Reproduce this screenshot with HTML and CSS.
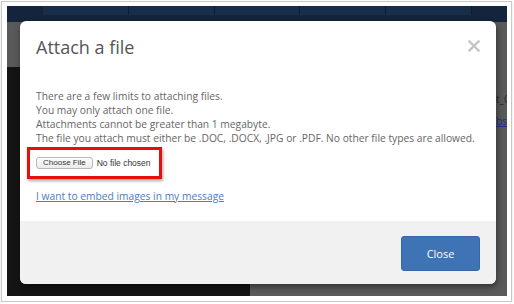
FILE: index.html
```html
<!DOCTYPE html>
<html>
<head>
<meta charset="utf-8">
<link rel="stylesheet" href="styles.css">
</head>
<body>
<div class="frame">
  <div class="screen">
    <div class="topbar">
      <div class="tabs"><span></span><span></span><span></span><span></span><span></span></div>
    </div>
    <div class="bg">
      <div class="bg-left"><div class="bg-left-head"></div></div>
      <div class="bg-right">
        <div class="bg-snip1">t_C</div>
        <div class="bg-snip2">bs</div>
      </div>
    </div>
    <div class="modal">
      <div class="modal-header">
        <h2 class="modal-title">Attach a file</h2>
        <svg class="modal-x" width="12" height="12" viewBox="0 0 12 12"><path d="M1.5 1.5L10.5 10.5M10.5 1.5L1.5 10.5" stroke="#c4c4c4" stroke-width="2.4" stroke-linecap="square"/></svg>
      </div>
      <div class="modal-body">
        <p class="limits">There are a few limits to attaching files.<br>You may only attach one file.<br>Attachments cannot be greater than 1 megabyte.<br>The file you attach must either be .DOC, .DOCX, .JPG or .PDF. No other file types are allowed.</p>
        <div class="file-box">
          <button class="file-btn">Choose File</button>
          <span class="file-none">No file chosen</span>
        </div>
        <a class="embed-link" href="#">I want to embed images in my message</a>
      </div>
      <div class="modal-footer">
        <button class="close-btn">Close</button>
      </div>
    </div>
  </div>
</div>
</body>
</html>
```
FILE: styles.css
```css
html, body { margin: 0; padding: 0; background: #fff; }
body { font-family: "Open Sans", "Liberation Sans", sans-serif; }
.frame {
  margin: 1px 0 0 1px;
  width: 500px;
  height: 290px;
  padding: 4px 4px 5px 5px;
  border: 1px solid #c9c9c9;
  box-shadow: 0 1px 2px rgba(0,0,0,0.15);
}
.screen {
  position: relative;
  width: 500px;
  height: 290px;
  overflow: hidden;
  display: flex;
  flex-direction: column;
}
.topbar {
  height: 16px;
  background: #13243c;
  flex: none;
}
.tabs {
  display: flex;
  margin-left: 36px;
  width: 429px;
  height: 9px;
  background: #182d4a;
}
.tabs span { flex: 1; border-right: 1px solid #0f1d31; }
.bg { flex: 1; display: flex; }
.bg-left { width: 243px; background: #141414; }
.bg-left-head { height: 45px; background: #595959; }
.bg-right { flex: 1; background: #5a5a5a; position: relative; }
.bg-snip1, .bg-snip2 {
  position: absolute; left: 246px; font-size: 10px; color: #2a2a2a;
}
.bg-snip1 { top: 70px; }
.bg-snip2 { top: 92px; color: #1c2f86; text-decoration: underline; }
.modal {
  position: absolute;
  left: 13px;
  top: 15px;
  width: 476px;
  height: 263px;
  background: #fff;
  border-radius: 6px;
  box-shadow: 1px 3px 6px rgba(0,0,0,0.45);
  display: flex;
  flex-direction: column;
  overflow: hidden;
}
.modal-header {
  display: flex;
  justify-content: space-between;
  align-items: flex-start;
  padding: 13px 16px 0 16px;
  height: 68px;
  box-sizing: border-box;
}
.modal-title {
  margin: 0;
  font-size: 18px;
  font-weight: 400;
  color: #555;
  line-height: 26px;
}
.modal-x {
  margin-top: 6px;
}
.modal-body {
  flex: 1;
  padding: 0 16px;
}
.limits {
  margin: 0;
  font-size: 10.25px;
  line-height: 14px;
  color: #666;
}
.file-box {
  box-sizing: border-box;
  margin: 2px 0 0 -9px;
  width: 135px;
  height: 32px;
  border: 3px solid #e4100f;
  box-shadow: 1px 2px 3px rgba(0,0,0,0.35);
  display: flex;
  align-items: center;
  padding-left: 6px;
  gap: 4px;
}
.file-btn {
  font-family: "Liberation Sans", sans-serif;
  font-size: 8px;
  color: #333;
  background: linear-gradient(#fbfbfb, #ececec);
  border: 1px solid #b9b9b9;
  border-radius: 3px;
  height: 12px;
  padding: 0 6px;
  line-height: 10px;
}
.file-none {
  font-family: "Liberation Sans", sans-serif;
  font-size: 8.5px;
  color: #333;
}
.embed-link {
  display: inline-block;
  margin-top: 10px;
  font-size: 10.25px;
  color: #4a7ec1;
  text-decoration: underline;
}
.modal-footer {
  height: 63px;
  background: #f1f1f1;
  display: flex;
  justify-content: flex-end;
  align-items: center;
  padding-right: 16px;
  flex: none;
}
.close-btn {
  width: 79px;
  height: 35px;
  background: #3e73b5;
  border: 1px solid #3666a3;
  border-radius: 3px;
  color: #fff;
  font-family: "Open Sans", sans-serif;
  font-size: 11px;
  margin-top: 1px;
}
```
